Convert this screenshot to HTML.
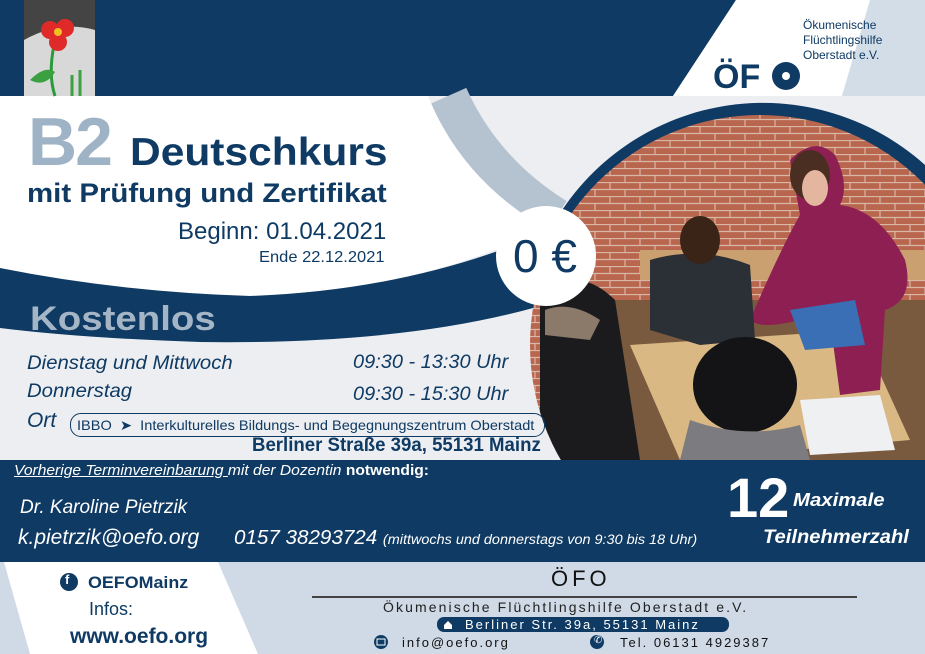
<!DOCTYPE html>
<html><head><meta charset="utf-8"><style>
*{margin:0;padding:0}
body{width:925px;height:654px;overflow:hidden;position:relative;font-family:"Liberation Sans",sans-serif;background:#eceef1}
.t{position:absolute;white-space:nowrap;line-height:1}
.n{color:#0e3a63}
.c{display:inline-block;transform-origin:left center}
</style></head><body>
<svg width="925" height="654" style="position:absolute;left:0;top:0">
<defs>
<clipPath id="ph"><circle cx="760" cy="345" r="230"/></clipPath>
<pattern id="brick" width="30" height="14" patternUnits="userSpaceOnUse">
<rect width="30" height="14" fill="#b9664f"/><path d="M0 0.5H30M0 7.5H30M10 0V7M25 7V14" stroke="#d9b7a5" stroke-width="1.2"/></pattern>
</defs>
<rect width="925" height="654" fill="#eceef1"/>
<polygon points="0,0 736,0 673,96 0,96" fill="#0e3a63"/>
<polygon points="736,0 870,0 842,96 673,96" fill="#fff"/>
<polygon points="870,0 925,0 925,96 842,96" fill="#d3dde8"/>
<path d="M448 96 Q482 172 556 218" stroke="#b5c2cf" stroke-width="40" fill="none"/>
<path d="M0 96 H428 Q462 180 545 228 Q420 290 250 296 Q100 294 0 268 Z" fill="#fff"/>
<path d="M0 268 Q120 292 250 296 Q420 290 560 226 L560 300 Q420 345 200 342 Q80 338 0 328 Z" fill="#0e3a63"/>
<path d="M545 300 L545 240 A242 242 0 0 1 925 165 L925 300 Z" fill="#0e3a63"/>
<g clip-path="url(#ph)">
<rect x="500" y="100" width="425" height="360" fill="url(#brick)"/>
<rect x="640" y="250" width="285" height="30" fill="#caa070"/>
<rect x="600" y="300" width="325" height="160" fill="#7a5a3e"/>
<polygon points="630,345 860,330 910,440 680,460" fill="#d9b884"/>
<path d="M790 160 Q815 135 835 155 Q850 185 840 205 Q880 210 905 260 Q915 300 885 310 L880 390 L840 395 L830 320 L800 320 Q760 330 750 320 Q780 250 800 215 Z" fill="#8e1f52"/>
<ellipse cx="810" cy="175" rx="20" ry="25" fill="#4a2e22"/>
<ellipse cx="815" cy="188" rx="13" ry="18" fill="#e4b6a0"/>
<path d="M650 260 Q700 245 750 265 L755 340 L700 345 L650 330 Z" fill="#2b2f36"/>
<ellipse cx="700" cy="240" rx="20" ry="24" fill="#3a2418"/>
<path d="M540 290 Q580 265 615 300 L640 460 L540 460 Z" fill="#1b1b1e"/>
<path d="M545 310 Q570 300 600 320 L590 340 L545 335 Z" fill="#8b7a6a"/>
<ellipse cx="745" cy="385" rx="52" ry="48" fill="#141416"/>
<path d="M690 420 Q745 440 800 425 L810 460 L680 460 Z" fill="#7b7b80"/>
<polygon points="790,310 855,300 865,345 805,350" fill="#3a6fb5"/>
<polygon points="800,400 880,395 895,450 810,455" fill="#eef0f2"/>
</g>
<circle cx="546" cy="256" r="50" fill="#fff"/>
<rect x="0" y="460" width="925" height="102" fill="#0e3a63"/>
<rect x="0" y="562" width="925" height="92" fill="#cfdae6"/>
<polygon points="4,562 218,562 258,654 30,654" fill="#fff"/>
<rect x="24" y="0" width="71" height="96" fill="#d8d8d8"/>
<path d="M24 0H95V30Q60 20 24 40Z" fill="#444"/>
<path d="M54 45 Q48 75 55 96" stroke="#2a9a3a" stroke-width="3" fill="none"/>
<path d="M30 80 Q45 65 55 72 Q45 88 30 80Z" fill="#3aa040"/>
<circle cx="50" cy="30" r="9" fill="#e02a2a"/><circle cx="65" cy="28" r="9" fill="#e02a2a"/><circle cx="58" cy="42" r="9" fill="#e02a2a"/><circle cx="58" cy="32" r="4" fill="#f0c020"/>
<path d="M72 75V96M80 70V96" stroke="#3aa040" stroke-width="3"/>
<circle cx="786" cy="76" r="14" fill="#0e3a63"/><circle cx="786" cy="76" r="4" fill="#fff"/>
<line x1="312" y1="597" x2="857" y2="597" stroke="#444" stroke-width="2"/>
<rect x="437" y="617" width="292" height="15" rx="7" fill="#0e3a63"/>
<circle cx="69" cy="582" r="9" fill="#0e3a63"/>
<circle cx="381" cy="642" r="7" fill="#0e3a63"/><rect x="377" y="639" width="8" height="6" fill="none" stroke="#fff" stroke-width="1"/>
<circle cx="597" cy="642" r="7" fill="#0e3a63"/>
<path d="M444 625l4-4 4 4v4h-8z" fill="#fff"/>
</svg>
<div class="t" style="left:65px;top:573px;color:#fff;font-weight:bold;font-size:13px">f</div>
<div class="t" style="left:594px;top:636px;color:#fff;font-size:10px">✆</div>

<div class="t n" style="left:803px;top:18px;font-size:12px;line-height:15px">Ökumenische<br>Flüchtlingshilfe<br>Oberstadt e.V.</div>
<div class="t n" style="left:713px;top:60px;font-size:34px;font-weight:bold">ÖF</div>

<div class="t" style="left:28px;top:108px;font-size:68px;font-weight:bold;color:#9fb3c6;letter-spacing:-2px">B2</div>
<div class="t n" style="left:130px;top:133px;font-size:39px;font-weight:bold"><span class="c" style="transform:scaleX(1.09)">Deutschkurs</span></div>
<div class="t n" style="left:27px;top:180px;font-size:27px;font-weight:bold"><span class="c" style="transform:scaleX(1.09)">mit Prüfung und Zertifikat</span></div>
<div class="t n" style="left:178px;top:220px;font-size:24px">Beginn: 01.04.2021</div>
<div class="t n" style="left:259px;top:250px;font-size:16px"><span class="c" style="transform:scaleX(1.03)">Ende 22.12.2021</span></div>
<div class="t n" style="left:513px;top:233px;font-size:46px">0 €</div>

<div class="t" style="left:30px;top:302px;font-size:34px;font-weight:bold;color:#a4b5c6"><span class="c" style="transform:scaleX(1.13)">Kostenlos</span></div>
<div class="t n" style="left:27px;top:354px;font-size:19px;font-style:italic"><span class="c" style="transform:scaleX(1.07)">Dienstag und Mittwoch</span></div>
<div class="t n" style="left:353px;top:353px;font-size:19px;font-style:italic"><span class="c" style="transform:scaleX(1.05)">09:30 - 13:30 Uhr</span></div>
<div class="t n" style="left:27px;top:382px;font-size:19px;font-style:italic"><span class="c" style="transform:scaleX(1.07)">Donnerstag</span></div>
<div class="t n" style="left:353px;top:385px;font-size:19px;font-style:italic"><span class="c" style="transform:scaleX(1.05)">09:30 - 15:30 Uhr</span></div>
<div class="t n" style="left:27px;top:410px;font-size:21px;font-style:italic">Ort</div>
<div class="t n" style="left:70px;top:413px;width:473px;height:22px;border:1.5px solid #0e3a63;border-radius:11px;font-size:14px;line-height:22px"><span class="c" style="transform:scaleX(1.04);margin-left:6px">IBBO &nbsp;➤ &nbsp;Interkulturelles Bildungs- und Begegnungszentrum Oberstadt</span></div>
<div class="t n" style="left:252px;top:436px;font-size:19px;font-weight:bold"><span class="c" style="transform:scaleX(.98)">Berliner Straße 39a, 55131 Mainz</span></div>

<div class="t" style="left:14px;top:463px;font-size:15px;font-style:italic;color:#fff"><span class="c" style="transform:scaleX(1.04)"><u>Vorherige Terminvereinbarung </u>mit der Dozentin <b style="font-style:normal">notwendig:</b></span></div>
<div class="t" style="left:20px;top:498px;font-size:19px;font-style:italic;color:#fff">Dr. Karoline Pietrzik</div>
<div class="t" style="left:18px;top:527px;font-size:21px;font-style:italic;color:#fff">k.pietrzik@oefo.org</div>
<div class="t" style="left:234px;top:528px;font-size:20px;font-style:italic;color:#fff"><span class="c" style="transform:scaleX(1.03)">0157 38293724 <span style="font-size:14px">(mittwochs und donnerstags von 9:30 bis 18 Uhr)</span></span></div>
<div class="t" style="left:727px;top:470px;font-size:56px;font-weight:bold;color:#fff">12</div>
<div class="t" style="left:793px;top:491px;font-size:18px;font-weight:bold;font-style:italic;color:#fff"><span class="c" style="transform:scaleX(1.13)">Maximale</span></div>
<div class="t" style="left:763px;top:528px;font-size:19px;font-weight:bold;font-style:italic;color:#fff"><span class="c" style="transform:scaleX(1.06)">Teilnehmerzahl</span></div>

<div class="t n" style="left:88px;top:574px;font-size:17px;font-weight:bold"><span class="c" style="transform:scaleX(1.05)">OEFOMainz</span></div>
<div class="t n" style="left:89px;top:600px;font-size:18px">Infos:</div>
<div class="t n" style="left:70px;top:626px;font-size:21px;font-weight:bold">www.oefo.org</div>

<div class="t" style="left:551px;top:568px;font-size:22px;letter-spacing:4px;color:#111">ÖFO</div>
<div class="t" style="left:383px;top:600px;font-size:14px;letter-spacing:2.1px;color:#222">Ökumenische Flüchtlingshilfe Oberstadt e.V.</div>
<div class="t" style="left:465px;top:618px;font-size:13px;letter-spacing:2px;color:#fff">Berliner Str. 39a, 55131 Mainz</div>
<div class="t" style="left:402px;top:636px;font-size:13px;letter-spacing:2px;color:#111">info@oefo.org</div>
<div class="t" style="left:620px;top:636px;font-size:13px;letter-spacing:2px;color:#111">Tel. 06131 4929387</div>
</body></html>
